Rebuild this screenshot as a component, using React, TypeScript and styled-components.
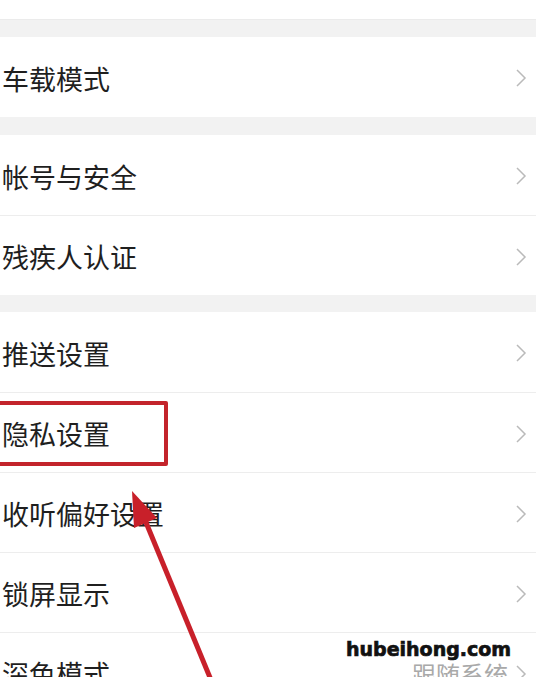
import React from 'react';
import styled, { createGlobalStyle } from 'styled-components';

// Styles
const GlobalStyle = createGlobalStyle`
  html, body {
    margin: 0;
    padding: 0;
    background: #f2f2f2;
  }
  body {
    overflow: hidden;
  }
`;

const Page = styled.div`
  position: relative;
  width: 536px;
  height: 677px;
  overflow: hidden;
  display: flex;
  flex-direction: column;
  background: #f2f2f2;
  font-family: 'Noto Sans CJK SC', 'Noto Sans', sans-serif;
`;

const TopStrip = styled.div`
  height: 20px;
  flex-shrink: 0;
  background: #fff;
  border-bottom: 1px solid #ebebeb;
  box-sizing: border-box;
`;

const Group = styled.section<{ $gap: number }>`
  flex-shrink: 0;
  margin-top: ${(p) => p.$gap}px;
  background: #fff;
`;

const Row = styled.div`
  position: relative;
  display: flex;
  align-items: center;
  justify-content: space-between;
  height: 80px;
  box-sizing: border-box;
  padding: 2px 9px 0 2px;

  & + & {
    border-top: 1px solid #ededed;
  }
`;

const Label = styled.span`
  font-size: 27px;
  line-height: 1;
  color: #1f1f1f;
`;

const Trail = styled.div`
  display: flex;
  align-items: center;
  gap: 7px;
`;

const Value = styled.span`
  font-size: 24px;
  line-height: 1;
  color: #a9a9a9;
`;

const Highlight = styled.div`
  position: absolute;
  left: -10px;
  top: 8px;
  width: 178px;
  height: 65px;
  box-sizing: border-box;
  border: 4px solid #c3242b;
  border-radius: 2px;
  pointer-events: none;
`;

const Overlay = styled.svg`
  position: absolute;
  left: 0;
  top: 0;
  pointer-events: none;
`;

const Watermark = styled.div`
  position: absolute;
  left: 338px;
  top: 634px;
  width: 198px;
  height: 29px;
  padding-left: 8px;
  box-sizing: border-box;
  background: #fff;
  font-family: 'DejaVu Sans', sans-serif;
  font-weight: bold;
  font-size: 19px;
  line-height: 31px;
  color: #111;
  -webkit-text-stroke: 0.7px #111;
`;

const Chevron: React.FC = () => (
  <svg width="12" height="20" viewBox="0 0 12 20">
    <polyline
      points="2,2 10,10 2,18"
      fill="none"
      stroke="#bababa"
      strokeWidth="1.5"
    />
  </svg>
);

interface ItemProps {
  label: string;
  value?: string;
  boxed?: boolean;
}

const Item: React.FC<ItemProps> = ({ label, value, boxed }) => (
  <Row>
    <Label>{label}</Label>
    <Trail>
      {value && <Value>{value}</Value>}
      <Chevron />
    </Trail>
    {boxed && <Highlight />}
  </Row>
);

const App: React.FC = () => {
  return (
    <Page>
      <GlobalStyle />
      <TopStrip />

      <Group $gap={17}>
        <Item label="车载模式" />
      </Group>

      <Group $gap={18}>
        <Item label="帐号与安全" />
        <Item label="残疾人认证" />
      </Group>

      <Group $gap={17}>
        <Item label="推送设置" />
        <Item label="隐私设置" boxed />
        <Item label="收听偏好设置" />
        <Item label="锁屏显示" />
        <Item label="深色模式" value="跟随系统" />
      </Group>

      <Overlay width="536" height="677" viewBox="0 0 536 677">
        <line x1="211" y1="680" x2="145" y2="520" stroke="#c8202a" strokeWidth="5" />
        <polygon points="132,491 157,518 134,528" fill="#c8202a" />
      </Overlay>

      <Watermark>hubeihong.com</Watermark>
    </Page>
  );
};

export default App;
